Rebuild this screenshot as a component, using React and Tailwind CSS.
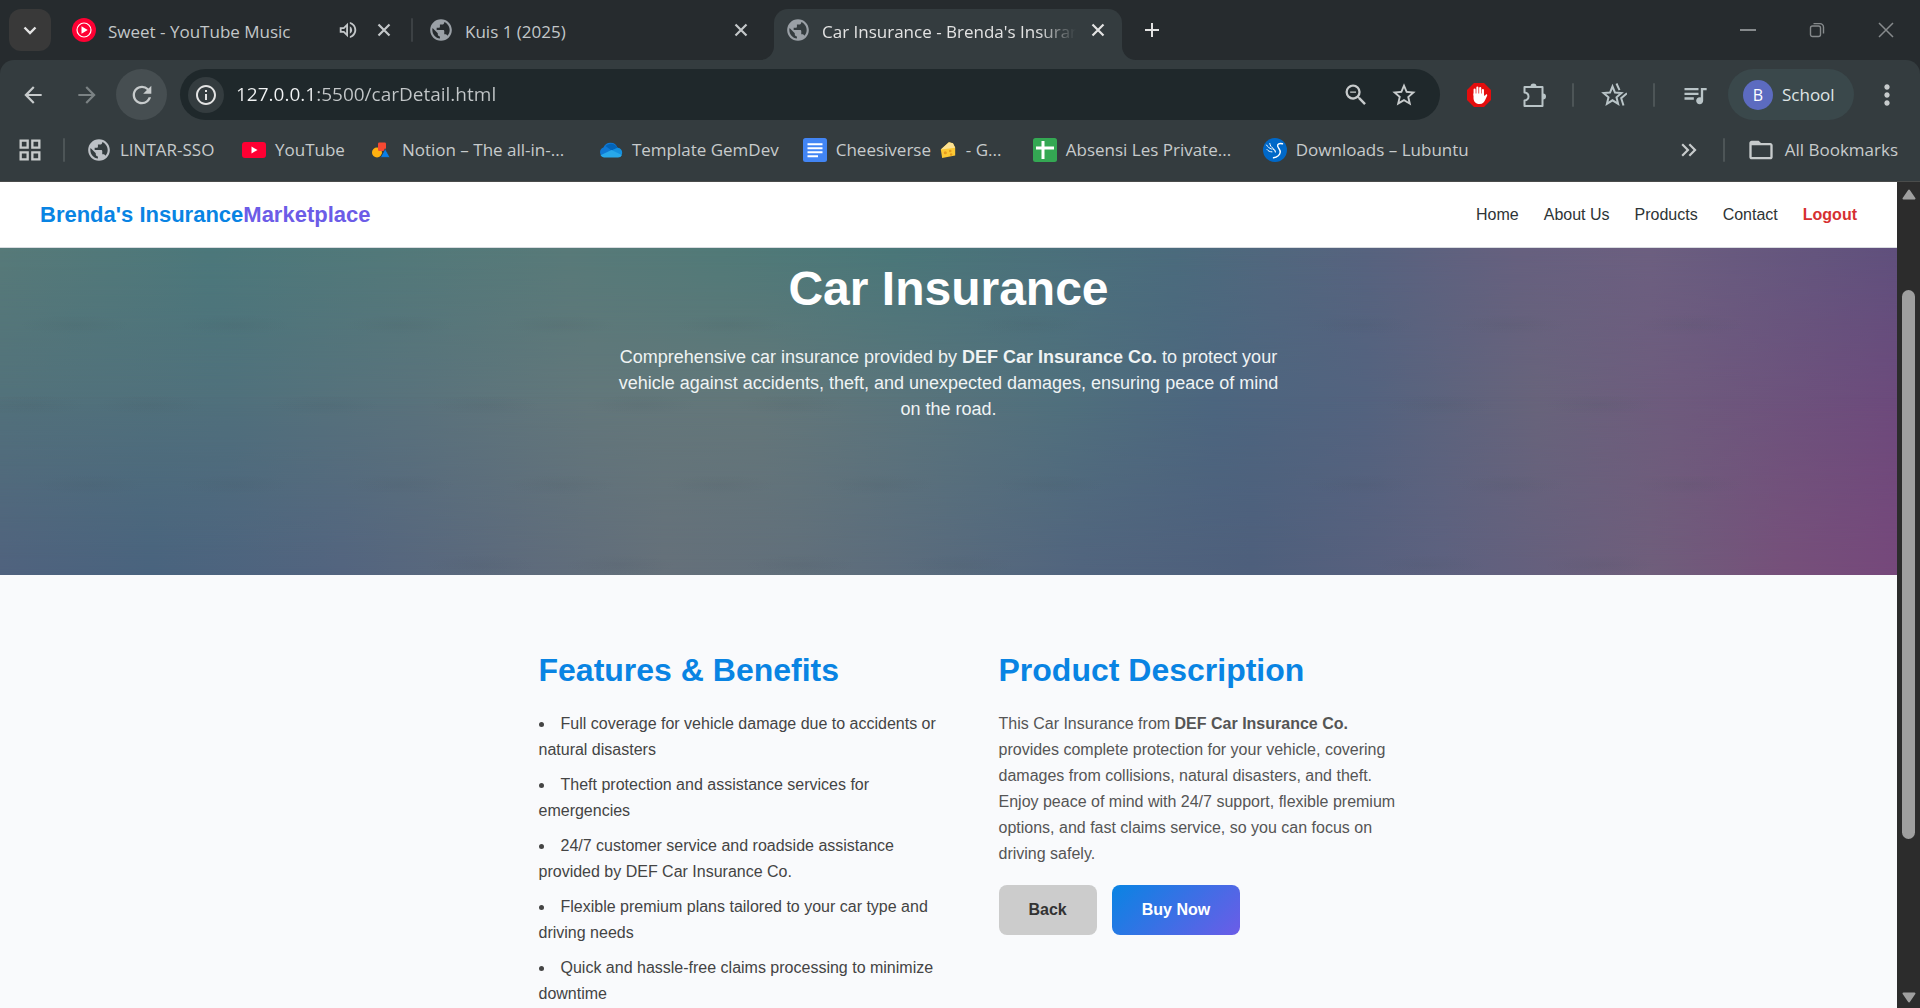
import {
  MdAdd,
  MdArrowBack,
  MdArrowForward,
  MdFolderOpen,
  MdInfoOutline,
  MdKeyboardDoubleArrowRight,
  MdMoreVert,
  MdOutlineGridView,
  MdOutlineVolumeUp,
  MdPublic,
  MdQueueMusic,
  MdRefresh,
  MdStarBorder,
  MdZoomOut,
} from "react-icons/md";

/* ---------- browser icons ---------- */

function MusicIcon() {
  return (
    <svg viewBox="0 0 24 24" className="size-6 shrink-0" aria-hidden="true">
      <circle cx="12" cy="12" r="12" fill="#ff0033" />
      <circle cx="12" cy="12" r="7" fill="none" stroke="#fff" strokeWidth="1.2" />
      <path d="M9.5 8.3v7.4L15.7 12z" fill="#fff" />
    </svg>
  );
}

function YouTubeIcon() {
  return (
    <svg viewBox="0 0 24 24" className="size-6 shrink-0" aria-hidden="true">
      <rect x="0" y="4" width="24" height="16" rx="3" fill="#ff0033" />
      <path d="M9.5 8.6v6.8l6-3.4z" fill="#fff" />
    </svg>
  );
}

function NotionBlocksIcon() {
  return (
    <svg viewBox="0 0 24 24" className="size-6 shrink-0" aria-hidden="true">
      <circle cx="8" cy="14.5" r="5" fill="#ffb110" />
      <rect x="9" y="4.5" width="8" height="8.5" rx="1.2" fill="#f64932" />
      <path d="M16.2 10.700 11.400 19.400h9.600z" fill="#097fe8" stroke="#343c3f" strokeWidth=".8" strokeLinejoin="round" />
    </svg>
  );
}

function CloudIcon() {
  return (
    <svg viewBox="0 0 24 24" className="size-6 shrink-0" aria-hidden="true">
      <path d="M5 19a5 5 0 0 1-.6-9.600A7.600 7.600 0 0 1 18.600 9.800 4.800 4.800 0 0 1 19 19z" fill="#0f78d4" />
      <path d="M6.500 8a7.600 7.600 0 0 1 12.100 1.800L12.500 12.500z" fill="#0364b8" />
      <path d="M12.500 12.500l6.100-2.700A4.800 4.800 0 0 1 22.500 17z" fill="#1490df" />
      <path d="M1.500 17.300 12.500 12l10.500 5a4.500 4.500 0 0 1-4 2.600H5a5 5 0 0 1-3.500-2.300z" fill="#28a8ea" />
    </svg>
  );
}

function DocsIcon() {
  return (
    <svg viewBox="0 0 24 24" className="size-6 shrink-0" aria-hidden="true">
      <rect width="24" height="24" rx="2.5" fill="#4285f4" />
      <path d="M4.500 6.200h15M4.500 10.200h15M4.500 14.200h15M4.500 18.200h10.500" stroke="#fff" strokeWidth="2" />
    </svg>
  );
}

function SheetsIcon() {
  return (
    <svg viewBox="0 0 24 24" className="size-6 shrink-0" aria-hidden="true">
      <rect width="24" height="24" rx="2.5" fill="#34a853" />
      <path d="M3 10h18M10 3v18" stroke="#fff" strokeWidth="3" />
    </svg>
  );
}

function LubuntuIcon() {
  return (
    <svg viewBox="0 0 24 24" className="size-6 shrink-0" aria-hidden="true">
      <circle cx="12" cy="12" r="12" fill="#0068c8" />
      <g fill="none" stroke="#fff" strokeLinecap="round" strokeLinejoin="round">
        <path d="M19.500 5.800c-2-.5-4-.3-4.700.9-.8 1.500.4 2.800 1.400 4.300 1.600 2.400 1 5-1 6.800-1.200 1-2.700 1.700-4.700 2" strokeWidth="1.400" />
        <path d="M3.500 7c1.200 2 2.800 3.300 5 4M6.800 5.500c.3 2.200 1.400 3.800 3.400 5M4 11.500c1.200 1.600 2.800 2.300 5 2.400" strokeWidth="1" />
        <path d="M10 11c1.600.7 2.400 1.600 2.400 3" strokeWidth="1.200" />
      </g>
    </svg>
  );
}

function CheeseIcon() {
  return (
    <svg viewBox="0 0 20 20" className="mx-1 inline size-[18px] align-[-3px]" aria-hidden="true">
      <path d="M2 9.500 11 1.500l4.500 1 2.500 5v8.500L3.500 19z" fill="#fcc934" />
      <path d="M2 9.500 11 1.500l4.500 1 2.500 5z" fill="#fde293" />
      <circle cx="7" cy="13" r="1.700" fill="#e59a1f" />
      <circle cx="12.500" cy="11" r="1.400" fill="#e59a1f" />
      <circle cx="13.500" cy="15" r="1.300" fill="#e59a1f" />
    </svg>
  );
}

function StopHandIcon() {
  return (
    <svg viewBox="0 0 26 26" className="size-[26px]" aria-hidden="true">
      <path d="M8 1h10l7 7v10l-7 7H8l-7-7V8z" fill="#e40d0d" />
      <path d="M8.600 13V7.500M11.400 12V5.500M14.200 12V6M16.900 13V8" stroke="#fff" strokeWidth="2.100" strokeLinecap="round" fill="none" />
      <path d="M7.500 11.500H18c0 2 .3 2.600.8 2.200.8-.9 1.400-1.700 2.200-1.300.900.6-.6 2.600-1.600 5-1.100 2.700-2.700 4.600-5.900 4.600-3.800 0-6-2.600-6-6z" fill="#fff" />
    </svg>
  );
}

function PuzzleIcon() {
  return (
    <svg viewBox="0 0 26 26" className="size-[26px]" aria-hidden="true">
      <path
        d="M3.500 5h18v19h-18v-5.500c2.600-.4 4-1.800 4-4s-1.400-3.600-4-4z"
        fill="none"
        stroke="currentColor"
        strokeWidth="2"
        strokeLinejoin="round"
      />
      <path d="M9.500 4.500a3 3 0 0 1 6 0zM22 11.500a3 3 0 0 1 0 6z" fill="currentColor" />
    </svg>
  );
}

function StarShareIcon() {
  return (
    <svg viewBox="0 0 26 26" className="size-[26px]" fill="none" stroke="currentColor" strokeWidth="2" aria-hidden="true">
      <path d="M11.500 4.500 14 10.600l6.400.5-4.900 4.200 1.600 6.500-5.600-3.500-5.600 3.500 1.600-6.500-4.900-4.200 6.400-.5z" />
      <path d="M15.500 1.500 18.500 8.200M26 11.300l-5.800 4.900 2.300 7.300" />
    </svg>
  );
}

function RestoreIcon() {
  return (
    <svg viewBox="0 0 16 16" className="size-4" fill="none" stroke="currentColor" strokeWidth="1.400" aria-hidden="true">
      <rect x="1.500" y="4" width="10" height="10.500" rx="2" />
      <path d="M4.500 1.600h6.500a3.500 3.500 0 0 1 3.500 3.500v6.500" />
    </svg>
  );
}

function GlobeIcon({ className }) {
  return (
    <span className="flex w-6 shrink-0 justify-center">
      <MdPublic className={className} />
    </span>
  );
}

/* ---------- browser chrome ---------- */

function TabFlare({ flip }) {
  return (
    <svg viewBox="0 0 14 14" className={flip ? "size-[14px] self-end -scale-x-100" : "size-[14px] self-end"} aria-hidden="true">
      <path d="M14 0v14H0A14 14 0 0 0 14 0z" fill="#343c3f" />
    </svg>
  );
}

function CloseTab({ label }) {
  return (
    <button aria-label={label} className="shrink-0">
      <svg viewBox="0 0 20 20" className="size-5" fill="none" stroke="currentColor" strokeWidth="2.2" aria-hidden="true">
        <path d="m4.500 4.500 11 11M15.500 4.500l-11 11" />
      </svg>
    </button>
  );
}

function TabStrip() {
  return (
    <div className="flex h-[60px] items-center bg-[#262b2e] pl-[9px] text-[17px] text-[#c3c7c9]">
      <button aria-label="Search tabs" className="flex size-[42px] shrink-0 items-center justify-center rounded-xl bg-[#393939] text-[#e3e3e3]">
        <svg viewBox="0 0 20 20" className="size-5" fill="none" stroke="currentColor" strokeWidth="2.4" aria-hidden="true">
          <path d="m4.500 7.500 5.500 5.500 5.500-5.500" />
        </svg>
      </button>
      <div className="flex w-[360px] items-center pr-[17px] pl-[21px]">
        <MusicIcon />
        <span className="ml-3 flex-1 truncate pt-1">Sweet - YouTube Music</span>
        <button aria-label="Mute tab" className="mr-[15px]">
          <MdOutlineVolumeUp className="size-[22px]" />
        </button>
        <CloseTab label="Close Sweet - YouTube Music" />
      </div>
      <div className="h-6 w-0.5 rounded bg-[#3c4144]" />
      <div className="flex w-[347px] items-center pr-[9px] pl-4">
        <GlobeIcon className="size-[26px] shrink-0 text-[#9aa0a6]" />
        <span className="ml-3 flex-1 truncate pt-1">Kuis 1 (2025)</span>
        <CloseTab label="Close Kuis 1 (2025)" />
      </div>
      <TabFlare />
      <div className="flex h-[51px] w-[348px] items-center self-end rounded-t-[14px] bg-[#343c3f] pr-[14px] pb-[9px] pl-3 text-[#e3e3e3]">
        <GlobeIcon className="size-[26px] shrink-0 text-[#9aa0a6]" />
        <span className="mr-3 ml-3 flex-1 overflow-hidden mask-r-from-85% pt-1 whitespace-nowrap">
          Car Insurance - Brenda's Insuran
        </span>
        <CloseTab label="Close Car Insurance" />
      </div>
      <TabFlare flip />
      <button aria-label="New tab" className="ml-1 text-[#e3e3e3]">
        <MdAdd className="size-6" />
      </button>
      <div className="ml-auto flex text-[#868a8c]">
        <button aria-label="Minimize" className="flex h-[60px] w-[69px] items-center justify-center">
          <span className="h-0.5 w-4 bg-[#868a8c]" />
        </button>
        <button aria-label="Restore" className="flex h-[60px] w-[69px] items-center justify-center">
          <RestoreIcon />
        </button>
        <button aria-label="Close window" className="flex h-[60px] w-[69px] items-center justify-center">
          <svg viewBox="0 0 16 16" className="size-4" stroke="currentColor" strokeWidth="1.5" aria-hidden="true">
            <path d="M1 1l14 14M15 1 1 15" />
          </svg>
        </button>
      </div>
    </div>
  );
}

function Divider({ className }) {
  return <div className={`h-6 w-0.5 shrink-0 rounded bg-[#4d5557] ${className}`} />;
}

function Toolbar() {
  return (
    <div className="flex h-[51px] items-center pr-[17px] pl-5 text-[#c7cbcc]">
      <button aria-label="Back">
        <MdArrowBack className="size-[26px]" />
      </button>
      <button aria-label="Forward" className="ml-7 text-[#7b8284]">
        <MdArrowForward className="size-[26px]" />
      </button>
      <button aria-label="Reload" className="ml-4 flex size-[51px] items-center justify-center rounded-full bg-[#464e51]">
        <MdRefresh className="size-7" />
      </button>
      <div className="ml-[13px] flex h-[51px] flex-1 items-center rounded-full bg-[#1f282b] pr-[22px] pl-2">
        <button aria-label="Site information" className="flex size-9 items-center justify-center rounded-full bg-[#343c3f] text-[#e3e3e3]">
          <MdInfoOutline className="size-6" />
        </button>
        <input
          aria-label="Address bar"
          defaultValue="127.0.0.1:5500/carDetail.html"
          className="ml-3 min-w-0 flex-1 bg-linear-to-r from-[#f1f3f4] from-[80px] to-[#c3c7c9] to-[80px] bg-clip-text text-[19px] text-transparent outline-none"
        />
        <button aria-label="Zoom">
          <MdZoomOut className="size-7" />
        </button>
        <button aria-label="Bookmark this tab" className="ml-5">
          <MdStarBorder className="size-7" />
        </button>
      </div>
      <button aria-label="Ad blocker" className="ml-[26px]">
        <StopHandIcon />
      </button>
      <button aria-label="Extensions" className="ml-[29px] text-[#b9c4c7]">
        <PuzzleIcon />
      </button>
      <Divider className="ml-[25px]" />
      <button aria-label="Favorites" className="ml-[27px] text-[#b9c4c7]">
        <StarShareIcon />
      </button>
      <Divider className="ml-[26px]" />
      <button aria-label="Media controls" className="ml-[26px] text-[#b9c4c7]">
        <MdQueueMusic className="size-7" />
      </button>
      <button className="ml-[19px] flex h-[51px] w-[126px] items-center rounded-full bg-[#3a484b] pl-[15px] text-[17px] text-[#dfe5e6]">
        <span className="mr-[9px] flex size-[30px] items-center justify-center rounded-full bg-[#5c6bc0] text-base text-white">B</span>
        School
      </button>
      <button aria-label="Menu" className="ml-[17px]">
        <MdMoreVert className="size-8" />
      </button>
    </div>
  );
}

function Bookmark({ icon, children, textWidth = "" }) {
  return (
    <a href="#" className="flex shrink-0 items-center gap-[9px] whitespace-nowrap">
      {icon}
      <span className={textWidth}>{children}</span>
    </a>
  );
}

function BookmarksBar() {
  return (
    <nav aria-label="Bookmarks" className="flex h-[60px] items-center pr-[22px] pl-4 text-[17px] text-[#c7cbcc]">
      <button aria-label="Apps">
        <MdOutlineGridView className="size-7" />
      </button>
      <Divider className="ml-[19px]" />
      <div className="ml-[22px] flex gap-6">
        <Bookmark icon={<GlobeIcon className="size-[26px] shrink-0 text-[#bdc1c6]" />} textWidth="w-[98px]">
          LINTAR-SSO
        </Bookmark>
        <Bookmark icon={<YouTubeIcon />}>YouTube</Bookmark>
        <Bookmark icon={<NotionBlocksIcon />} textWidth="w-[173px]">
          Notion – The all-in-...
        </Bookmark>
        <Bookmark icon={<CloudIcon />}>Template GemDev</Bookmark>
        <Bookmark icon={<DocsIcon />} textWidth="w-[173px]">
          Cheesiverse <CheeseIcon /> - G...
        </Bookmark>
        <Bookmark icon={<SheetsIcon />} textWidth="w-[173px]">
          Absensi Les Private...
        </Bookmark>
        <Bookmark icon={<LubuntuIcon />}>Downloads – Lubuntu</Bookmark>
      </div>
      <button aria-label="More bookmarks" className="ml-auto">
        <MdKeyboardDoubleArrowRight className="size-[26px]" />
      </button>
      <Divider className="ml-[21px]" />
      <button className="ml-[22px] flex items-center gap-[10px] whitespace-nowrap">
        <MdFolderOpen className="size-7" />
        All Bookmarks
      </button>
    </nav>
  );
}

function Scrollbar() {
  return (
    <div className="flex w-[23px] shrink-0 flex-col items-center bg-[#2c2c2c] pt-[7px] pb-[5px]" aria-hidden="true">
      <svg viewBox="0 0 14 11" className="h-[11px] w-[14px]">
        <path d="M7 1.500 12.500 9.500h-11z" fill="#9f9f9f" stroke="#9f9f9f" strokeWidth="2" strokeLinejoin="round" />
      </svg>
      <div className="mt-[90px] h-[549px] w-[13px] rounded-full bg-[#9f9f9f]" />
      <svg viewBox="0 0 14 11" className="mt-auto h-[11px] w-[14px]">
        <path d="M7 9.500 12.500 1.500h-11z" fill="#9f9f9f" stroke="#9f9f9f" strokeWidth="2" strokeLinejoin="round" />
      </svg>
    </div>
  );
}

/* ---------- insurance site ---------- */

const navLinks = ["Home", "About Us", "Products", "Contact"];

const features = [
  "Full coverage for vehicle damage due to accidents or natural disasters",
  "Theft protection and assistance services for emergencies",
  "24/7 customer service and roadside assistance provided by DEF Car Insurance Co.",
  "Flexible premium plans tailored to your car type and driving needs",
  "Quick and hassle-free claims processing to minimize downtime",
];

function SiteHeader() {
  return (
    <header className="flex h-[66px] items-center justify-between border-b border-[#d9dce0] bg-white px-10">
      <a href="#" className="text-[22px] font-bold text-[#0984e3]">
        Brenda's Insurance<span className="text-[#6c5ce7]">Marketplace</span>
      </a>
      <nav aria-label="Site" className="flex gap-[25px] text-base text-[#2d3436]">
        {navLinks.map((label) => (
          <a key={label} href="#">
            {label}
          </a>
        ))}
        <a href="#" className="font-bold text-[#d63031]">
          Logout
        </a>
      </nav>
    </header>
  );
}

const smudgeRows = [
  { y: 77, xs: [75, 235, 400, 560, 730, 1030, 1360, 1510, 1690] },
  { y: 157, xs: [30, 150, 325, 485, 640, 790, 1440, 1600] },
  { y: 237, xs: [90, 235, 400, 560, 720, 880, 1050, 1360, 1510, 1690] },
  { y: 317, xs: [480, 620, 800, 960, 1430, 1600] },
];

/* Faint dark streaks that give the hero backdrop its texture. */
function Smudges() {
  return (
    <svg viewBox="0 0 1897 327" preserveAspectRatio="none" className="absolute inset-0 size-full" aria-hidden="true">
      <defs>
        <radialGradient id="smudge">
          <stop offset="0" stopColor="#3c4a55" stopOpacity=".09" />
          <stop offset="1" stopColor="#3c4a55" stopOpacity="0" />
        </radialGradient>
      </defs>
      {smudgeRows.map(({ y, xs }) => xs.map((x) => <ellipse key={`${x}-${y}`} cx={x} cy={y} rx="56" ry="10" fill="url(#smudge)" />))}
    </svg>
  );
}

function Hero() {
  return (
    <section className="relative min-h-[327px] bg-[linear-gradient(90deg,#577a79_0%,#4c787b_11%,#52797a_20%,#587a79_30%,#517a78_38%,#4a7779_47%,#4b6b7d_62%,#57637f_72%,#66607f_80%,#6c5f80_87%,#60507d_100%)] px-10 pt-3 text-center text-white">
      <div className="absolute inset-0 bg-[linear-gradient(90deg,#52717b_0%,#50707c_12%,#5a727c_22%,#63777b_31%,#64777a_40%,#5a747c_48%,#50707d_56%,#4c667f_64%,#53637f_72%,#68647b_81%,#6e5b7d_88%,#6d4a7c_100%)] [mask-image:linear-gradient(transparent,black_50%)]" />
      <div className="absolute inset-0 bg-[linear-gradient(90deg,#50627e_0%,#49637e_8%,#53647f_18%,#5d6a7c_27%,#65707a_35%,#616f7b_42%,#586a7d_50%,#51647e_57%,#4e5f7c_66%,#5d617f_76%,#6f5e7b_87%,#76507a_94%,#76487b_100%)] [mask-image:linear-gradient(transparent_45%,black)]" />
      <Smudges />
      <div className="relative">
        <h1 className="mb-[26px] text-5xl leading-[58px] font-bold">Car Insurance</h1>
        <p className="mx-auto max-w-2xl text-lg leading-[26px] text-[#eff3f4]">
          Comprehensive car insurance provided by <strong>DEF Car Insurance Co.</strong> to protect your vehicle against
          accidents, theft, and unexpected damages, ensuring peace of mind on the road.
        </p>
      </div>
    </section>
  );
}

function Details() {
  return (
    <section className="mx-auto grid max-w-[900px] grid-cols-2 gap-[60px] pt-[76px] pl-10 leading-[26px]">
      <div>
        <h2 className="mb-[22px] text-[32px] leading-[38px] font-bold text-[#0984e3]">Features &amp; Benefits</h2>
        <ul className="flex list-inside list-disc flex-col gap-[9px] text-[#444444]">
          {features.map((feature) => (
            <li key={feature}>{feature}</li>
          ))}
        </ul>
      </div>
      <div>
        <h2 className="mb-[22px] text-[32px] leading-[38px] font-bold text-[#0984e3]">Product Description</h2>
        <p className="text-[#555555]">
          This Car Insurance from <strong>DEF Car Insurance Co.</strong> provides complete protection for your vehicle,
          covering damages from collisions, natural disasters, and theft. Enjoy peace of mind with 24/7 support, flexible
          premium options, and fast claims service, so you can focus on driving safely.
        </p>
        <div className="mt-[18px] flex gap-[15px] font-bold">
          <button className="rounded-lg bg-[#cccccc] px-[30px] py-3 text-[#333333]">Back</button>
          <button className="rounded-lg bg-[linear-gradient(135deg,#0984e3,#6c5ce7)] px-[30px] py-3 text-white">
            Buy Now
          </button>
        </div>
      </div>
    </section>
  );
}

export default function App() {
  return (
    <div className="flex h-screen flex-col overflow-hidden bg-[#262b2e] font-['Open_Sans',sans-serif]">
      <TabStrip />
      <div className="shrink-0 rounded-t-[14px] border-b border-[#4a4c4b] bg-[#343c3f] pt-[9px] pb-px">
        <Toolbar />
        <BookmarksBar />
      </div>
      <div className="flex min-h-0 flex-1">
        <main className="min-w-0 flex-1 overflow-hidden bg-[#f9fafc] font-['Liberation_Sans',Arial,sans-serif]">
          <SiteHeader />
          <Hero />
          <Details />
        </main>
        <Scrollbar />
      </div>
    </div>
  );
}
